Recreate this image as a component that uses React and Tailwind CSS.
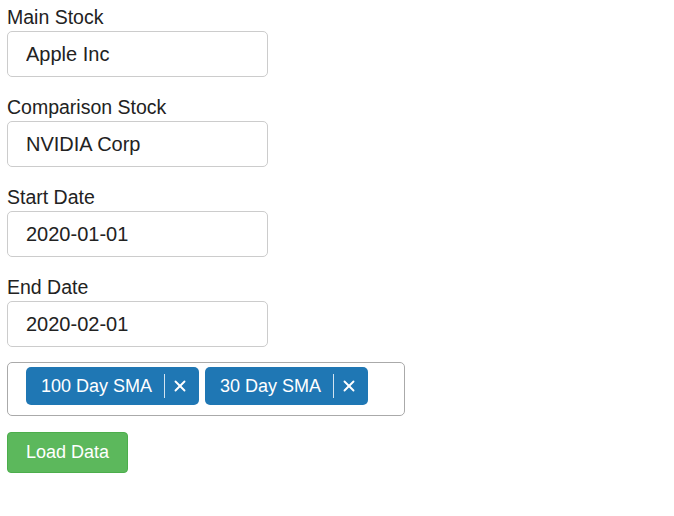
import { X } from 'lucide-react'

const fields = [
  { label: 'Main Stock', value: 'Apple Inc' },
  { label: 'Comparison Stock', value: 'NVIDIA Corp' },
  { label: 'Start Date', value: '2020-01-01' },
  { label: 'End Date', value: '2020-02-01' },
]

const indicators = ['100 Day SMA', '30 Day SMA']

export default function App() {
  return (
    <div className="px-[7px] pt-[4px] font-['Liberation_Sans',Arial,sans-serif] text-[#222]">
      {fields.map((f, i) => (
        <div key={f.label} className={i === fields.length - 1 ? 'mb-[15px]' : 'mb-[17px]'}>
          <label className="block text-[19.5px] leading-[27px]">{f.label}</label>
          <input
            readOnly
            value={f.value}
            className="w-[261px] h-[46px] border border-[#ccc] rounded-[5px] pl-[18px] text-[20px] text-[#222] outline-none"
          />
        </div>
      ))}

      {/* selected indicators */}
      <div className="w-[398px] h-[54px] border border-[#aaa] rounded-[5px] flex items-start gap-[6px] pl-[18px] pt-[4px]">
        {indicators.map((name) => (
          <div
            key={name}
            className="flex items-center h-[38px] bg-[#1f77b4] text-white rounded-[5px] pl-[15px] pr-[10px] text-[18px]"
          >
            <span>{name}</span>
            <span className="ml-[12px] w-px h-[24px] bg-white/80" />
            <X className="ml-[6px] w-[18px] h-[18px]" strokeWidth={2.5} />
          </div>
        ))}
      </div>

      <button className="mt-[16px] h-[41px] px-[18px] bg-[#5cb85c] border border-[#4cae4c] rounded-[4px] text-white text-[18px]">
        Load Data
      </button>
    </div>
  )
}
